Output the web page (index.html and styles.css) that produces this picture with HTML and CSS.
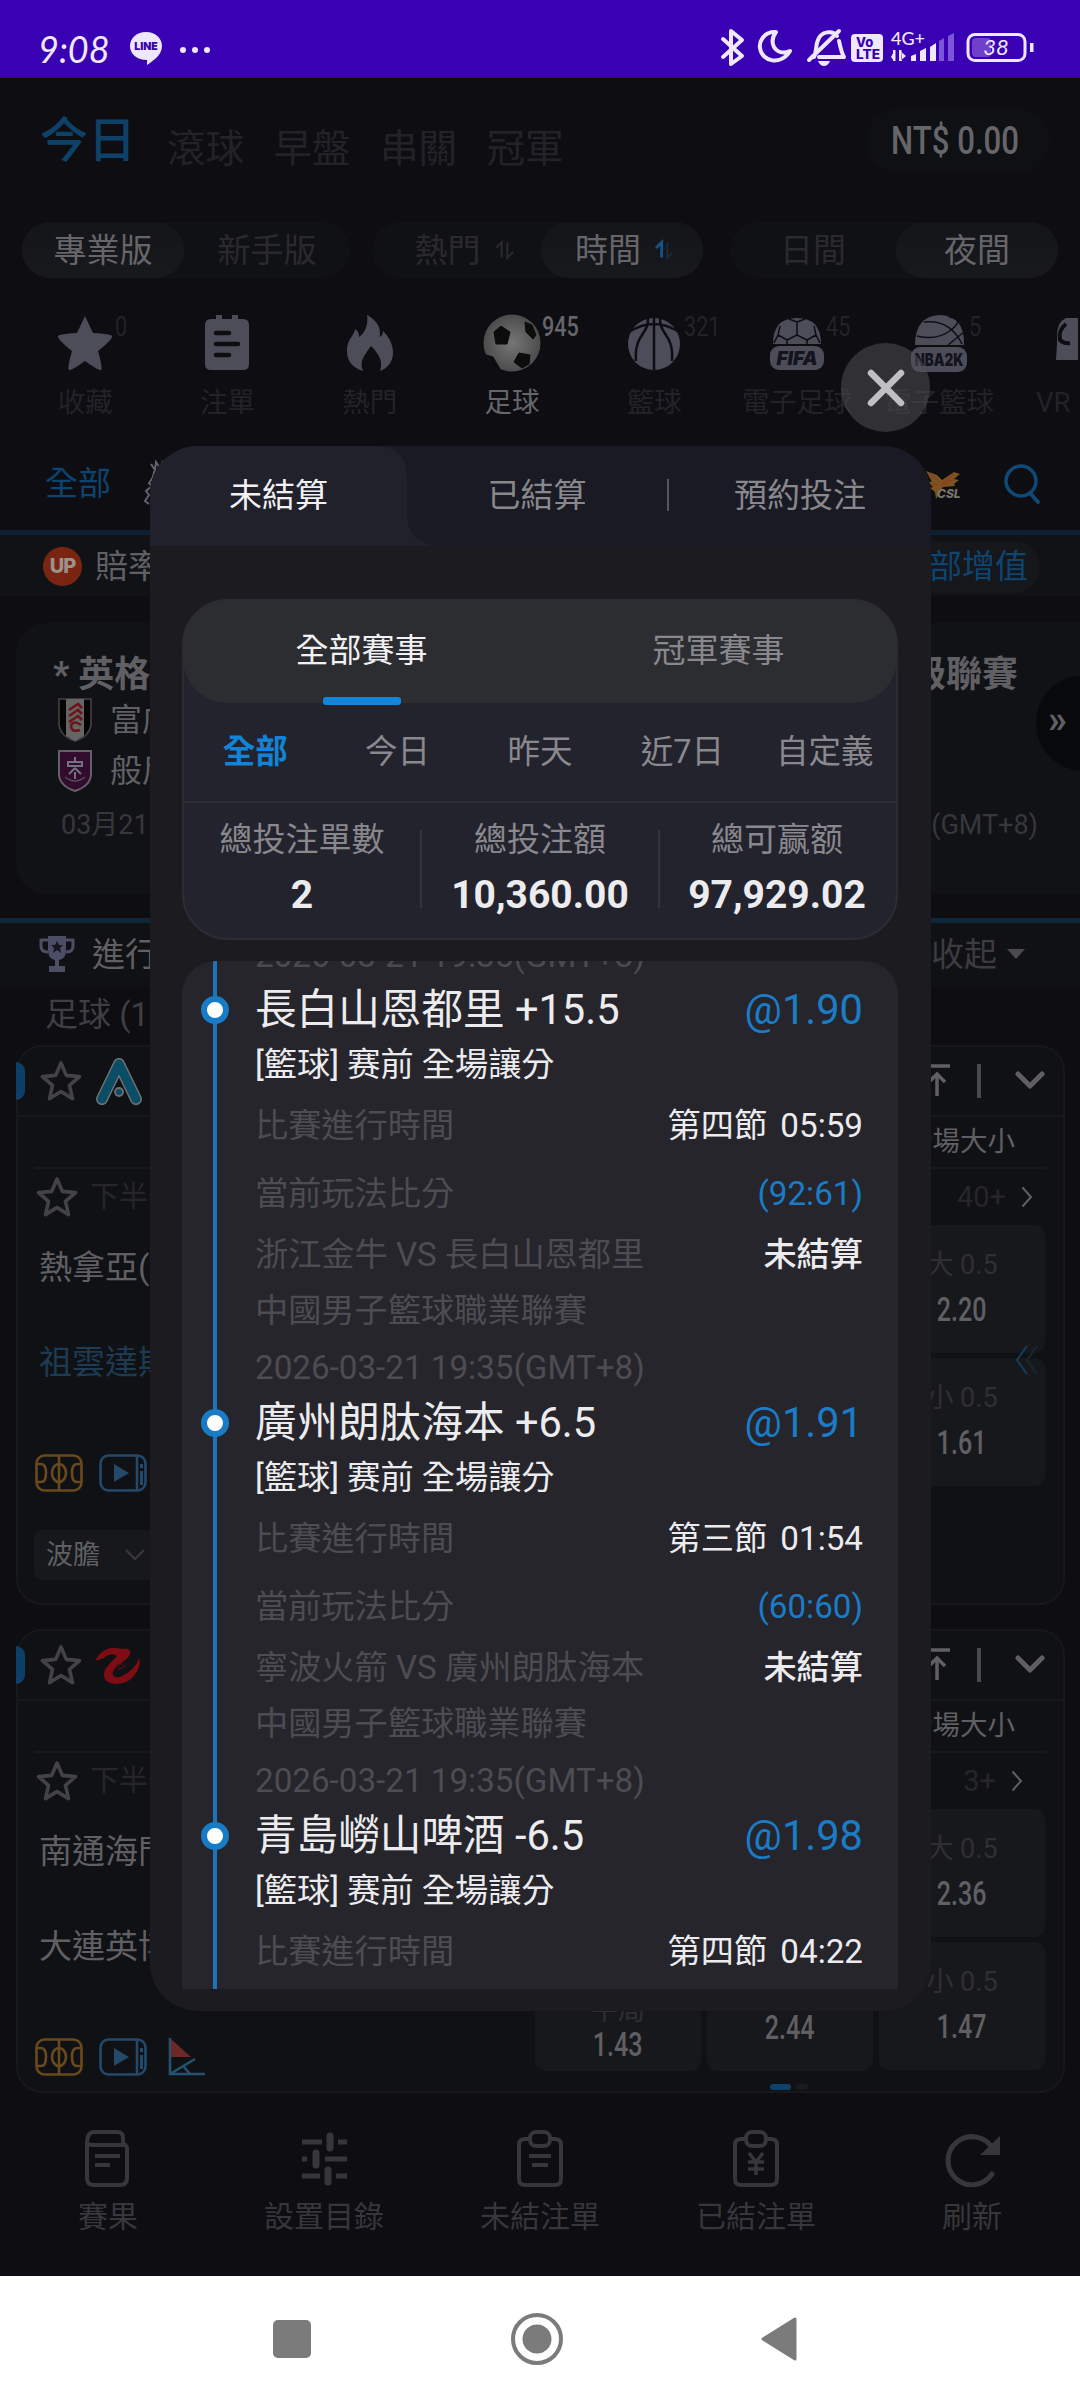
FILE: index.html
```html
<!DOCTYPE html>
<html lang="zh-Hant">
<head>
<meta charset="utf-8">
<title>未結算</title>
<link rel="stylesheet" href="styles.css">
</head>
<body>
<svg width="0" height="0" class="defs">
  <symbol id="star" viewBox="0 0 42 42"><path d="M21 3l5.300 12.400 13.200 1.200-10 8.800 3 13.200L21 31.500 9.500 38.600l3-13.200-10-8.800 13.200-1.200z" fill="none" stroke="currentColor" stroke-width="3.600" stroke-linejoin="round"/></symbol>
  <symbol id="court" viewBox="0 0 48 38"><g fill="none" stroke="currentColor" stroke-width="2.600"><rect x="1.500" y="1.500" width="45" height="35" rx="8"/><path d="M24 1.500v35M2 10h4q5 0 5 9t-5 9H2M46 10h-4q-5 0-5 9t5 9h4"/><ellipse cx="24" cy="19" rx="7" ry="9"/></g></symbol>
  <symbol id="video" viewBox="0 0 48 38"><g fill="none" stroke="currentColor" stroke-width="2.600"><rect x="1.500" y="1.500" width="45" height="35" rx="8"/><path d="M38 2v34"/></g><path d="M15 10l15 9-15 9zM41 10h3v4h-3zM41 17h3v14h-3z" fill="currentColor"/></symbol>
  <symbol id="totop" viewBox="0 0 26 36"><path d="M0 3h25M12 33V11M4 19l8-8 8 8" fill="none" stroke="currentColor" stroke-width="3.500"/></symbol>
  <symbol id="down" viewBox="0 0 30 20"><path d="M3 3l12 12L27 3" fill="none" stroke="currentColor" stroke-width="5" stroke-linecap="round" stroke-linejoin="round"/></symbol>
  <symbol id="next" viewBox="0 0 12 22"><path d="M1.500 1.500L10 11l-8.500 9.500" fill="none" stroke="currentColor" stroke-width="2"/></symbol>
</svg>

<header class="status">
  <div class="status-left">
    <span class="clock">9:08</span>
    <svg class="line-app" viewBox="0 0 32 33"><path d="M16 0c9 0 16 6 16 14 0 9-9 15-15 19v-5C7 28 0 22 0 14S7 0 16 0z" fill="#eee6fb"/><text x="16" y="18" text-anchor="middle" class="line-word">LINE</text></svg>
    <span class="dots"><i></i><i></i><i></i></span>
  </div>
  <svg class="status-icons" viewBox="0 0 320 42">
    <g fill="none" stroke="#efe8fb" stroke-width="4" stroke-linejoin="round" stroke-linecap="round">
      <path d="M4 12l19 17-11 8V4l11 9L4 30"/>
      <path d="M57 5c-13-1-17 11-16 16 2 14 21 18 30 3-7 3-13 1-16-4-3-6-1-11 2-15z"/>
      <path d="M95 30c3-5 1-11 4-17 3-9 15-10 19-4M120 14c2 8 2 11 5 16h-25M90 33l30-29"/>
    </g>
    <path d="M99 34h12q-2 5-6 5t-6-5z" fill="#efe8fb"/>
    <rect x="132" y="7" width="32" height="28" rx="4" fill="#efe8fb"/>
    <text x="137" y="20" class="volte">Vo</text><text x="137" y="32" class="volte" textLength="24" lengthAdjust="spacingAndGlyphs">LTE</text>
    <text x="172" y="18" class="gen">4G+</text>
    <path d="M175 24v10l-3-4M181 34V24l6 5M181 34h2V24zM192 34v-5l5-2v7zM201 34V24l6-3v13zM211 34V20l6-4v18z" fill="#efe8fb"/>
    <path d="M174 23h2.500v11H174zM180 23h2.500v11H180z" fill="#efe8fb"/>
    <path d="M220 34V14l5-3v23zM229 34V9l6-3v28z" fill="#7d55d8"/>
    <rect x="249" y="7.500" width="57" height="26" rx="7" fill="none" stroke="#efe8fb" stroke-width="3"/>
    <rect x="253" y="11" width="19" height="19" rx="4" fill="#7040cc"/>
    <rect x="311" y="16" width="3.500" height="9" fill="#efe8fb"/>
    <text x="277" y="28" text-anchor="middle" class="charge">38</text>
  </svg>
</header>

<main class="app">
  <div class="top">
    <nav class="top-tabs"><b>今日</b><span>滾球</span><span>早盤</span><span>串關</span><span>冠軍</span></nav>
    <div class="balance"><span class="din">NT$ 0.00</span></div>
  </div>

  <div class="segments">
    <div class="seg"><span class="on">專業版</span><span>新手版</span></div>
    <div class="seg mid"><span>熱門<svg class="sort" viewBox="0 0 20 18"><path d="M1 7l6-6v16M13 1v16l6-6" fill="none" stroke="currentColor" stroke-width="2.200"/></svg></span><span class="on">時間<svg class="sort" viewBox="0 0 20 18"><path d="M1 7l6-6v16" fill="none" stroke="#12538a" stroke-width="3"/><path d="M13 1v16l5-5" fill="none" stroke="#1a2c3c" stroke-width="2"/></svg></span></div>
    <div class="seg end"><span>日間</span><span class="on">夜間</span></div>
  </div>

  <nav class="sports">
    <div class="sport"><svg viewBox="0 0 58 58"><path d="M29 2l8 17q18 1 19 3 1 3-14 15 5 18 3 19-2 1-16-9-14 10-16 9-2-1 3-19Q1 25 2 22q1-2 19-3z" fill="currentColor"/></svg><em class="din">0</em><span>收藏</span></div>
    <div class="sport"><svg viewBox="0 0 58 58"><path d="M13 5h5V1h6v4h10V1h6v4h5q6 0 6 6v39q0 6-6 6H13q-6 0-6-6V11q0-6 6-6z" fill="currentColor"/><path d="M18 19h13M18 30h22M18 41h13" stroke="#0d0d12" stroke-width="4.500" stroke-linecap="round"/></svg><span>注單</span></div>
    <div class="sport"><svg viewBox="0 0 58 58"><path d="M26 1c14 8 13 16 13 22 2-1 3-4 3-6 6 6 10 13 10 22 0 10-7 16-13 18 3-9 0-16-9-25-7 10-12 15-8 25C12 54 6 47 6 38c0-14 7-15 8-23 3 2 4 4 4 8 5-3 10-12 8-22z" fill="currentColor"/></svg><span>熱門</span></div>
    <div class="sport active"><svg viewBox="0 0 58 58"><defs><radialGradient id="ball"><stop offset="0" stop-color="#767676"/><stop offset="1" stop-color="#4c4c4c"/></radialGradient></defs><circle cx="29" cy="29" r="28.500" fill="url(#ball)"/><path d="M18 12l9 6-3 12H13l-2-12zM42 8l7 3 4 10-3 4-7-7zM36 39l11 2-1 9-7 4-8-6zM3 41l7 2 7 12-6-3z" fill="#0b0c0b" stroke="#0b0c0b" stroke-linejoin="round"/></svg><em class="din">945</em><span>足球</span></div>
    <div class="sport"><svg viewBox="0 0 58 58"><circle cx="29" cy="30" r="26" fill="currentColor"/><path d="M29 3v54M4 18q25-16 50 0M23 3c1 19-14 16-12 44M35 3c-1 19 14 16 12 44" fill="none" stroke="#0d0d12" stroke-width="2.500"/></svg><em class="din">321</em><span>籃球</span></div>
    <div class="sport"><svg viewBox="0 0 58 58"><path d="M5 30q0-26 24-26t24 26z" fill="currentColor"/><path d="M29 8l8-3M29 8l-8-3M29 8v13M29 21l-10 5v5M29 21l10 5v5M19 26l-9-5M39 26l9-5M10 21l-4 8M48 21l4 8M10 21l2-9M48 21l-2-9" fill="none" stroke="#0d0d12" stroke-width="1.500"/><rect x="2" y="32" width="54" height="24" rx="9" fill="currentColor"/><text x="29" y="51" text-anchor="middle" class="badge-word">FIFA</text></svg><em class="din">45</em><span>電子足球</span></div>
    <div class="sport"><svg viewBox="0 0 58 58"><path d="M5 31Q5 2 30 1q25 1 24 30z" fill="currentColor"/><path d="M7 22q20 5 34-6t-2-13M14 8q26-3 38 22M54 18L38 31" fill="none" stroke="#0d0d12" stroke-width="1.500"/><rect x="1" y="33" width="56" height="25" rx="9" fill="currentColor"/><text x="29" y="52" text-anchor="middle" textLength="49" lengthAdjust="spacingAndGlyphs" class="badge-word nba">NBA2K</text></svg><em class="din">5</em><span>電子籃球</span></div>
    <div class="sport"><svg viewBox="0 0 58 58"><path d="M14 4Q5 8 5 22v8l-1 16h22V4z" fill="currentColor"/><path d="M14 10Q6 16 8 26q4 4 10 3" fill="none" stroke="#0d0d12" stroke-width="4"/></svg><span>VR</span></div>
  </nav>

  <div class="leagues">
    <span class="all">全部</span>
    <svg class="lion" viewBox="0 0 40 50"><path d="M8 5l4 6 1-8 4 6 3-7v10M22 13H11l-1 5-4 6 3 3-6 5 3 4-4 6 4 3" fill="none" stroke="#65616f" stroke-width="2"/></svg>
    <svg class="csl" viewBox="0 0 40 28"><path d="M2 0l11 4 5 5L30 1l6 2-6 5 5 1-5 4 1 2-12 1-7 12-1-7-5-4 3-1-6-6 5 1z" fill="#7a5520"/><path d="M4 2l11 8M30 3l-11 9-5 12M7 13l7 1M20 13l10-5" fill="none" stroke="#8f3f22" stroke-width="1.500"/><text x="13" y="27" class="csl-word">CSL</text></svg>
    <svg class="search" viewBox="0 0 36 40"><circle cx="17" cy="17" r="15" fill="none" stroke="#0e4a78" stroke-width="3.500"/><path d="M26 29l8 9" stroke="#0e4a78" stroke-width="4" stroke-linecap="round"/></svg>
  </div>

  <div class="boost">
    <span class="up">UP</span><span>賠率</span><span class="boost-btn">全部增值</span>
  </div>

  <section class="promo">
    <div class="promo-title"><span>* 英格蘭</span><span>超級聯賽</span></div>
    <div class="promo-team"><svg viewBox="0 0 34 44"><path d="M1 1h32v26q-2 12-16 16Q3 39 1 27z" fill="#050505" stroke="#464646" stroke-width="1.500"/><path d="M8 1h18v37l-9 5-9-5z" fill="#656565"/><path d="M11 12l9-6 4 4M11 18l9-6 4 4M11 24l9-6 4 4M23 27q-7-5-10 0 0 8 9 5" fill="none" stroke="#6d151b" stroke-width="2.600"/></svg><span>富咸</span></div>
    <div class="promo-team second"><svg viewBox="0 0 34 42"><path d="M1 1h32v24q-1 11-16 16Q2 36 1 25z" fill="#320c2c" stroke="#666069" stroke-width="2"/><path d="M10 12h14v4H10zM17 7v5M17 18l-6 6M17 18l6 6M17 22v7" fill="none" stroke="#737080" stroke-width="2"/><path d="M7 27q10 8 20 0" fill="none" stroke="#5a4a5c" stroke-width="1.500"/></svg><span>般尼</span></div>
    <div class="promo-date"><span>03月21</span><span>(GMT+8)</span></div>
    <div class="more">»</div>
  </section>

  <div class="live-head">
    <svg class="cup" viewBox="0 0 36 36"><path d="M9 0h18v14q0 9-7 10v6h6v6H10v-6h6v-6q-7-1-7-10z" fill="#4c4e66"/><path d="M9 4H2v6q0 6 7 6M27 4h7v6q0 6-7 6" fill="none" stroke="#4c4e66" stroke-width="3"/><path d="M18 5l2 4h4l-3 3 1 5-4-3-4 3 1-5-3-3h4z" fill="#17171f"/></svg>
    <span>進行</span><span class="fold">收起<i></i></span>
  </div>
  <div class="group">足球 (1</div>

  <section class="match">
    <div class="match-head"><i class="tab"></i><svg class="star"><use href="#star"/></svg>
      <svg class="logo" viewBox="0 0 50 50"><path d="M25 8L8 43M25 8l17 35" fill="none" stroke="#6f7275" stroke-width="12" stroke-linejoin="round" stroke-linecap="round"/><path d="M25 8L8 43M25 8l17 35" fill="none" stroke="#094d66" stroke-width="9" stroke-linejoin="round" stroke-linecap="round"/><circle cx="25" cy="36" r="4" fill="#094d66" stroke="#6f7275" stroke-width="1.800"/></svg>
      <div class="tools"><svg class="totop"><use href="#totop"/></svg><i></i><svg class="down"><use href="#down"/></svg></div></div>
    <div class="match-cols">全場大小</div>
    <div class="match-time"><svg class="star"><use href="#star"/></svg><span>下半</span><span class="count">40+</span><svg class="next"><use href="#next"/></svg></div>
    <div class="match-main">
      <div class="teams"><p>熱拿亞(</p><p class="home">祖雲達斯</p>
        <div class="feeds"><svg class="court"><use href="#court"/></svg><svg class="video"><use href="#video"/></svg></div></div>
      <div class="odds"><div class="odd"><small>大 0.5</small><b class="din">2.20</b></div><div class="odd"><small>小 0.5</small><b class="din">1.61</b></div>
      <svg class="swipe" viewBox="0 0 24 30"><path d="M12 1L2 15l10 14" fill="none" stroke="#153d5e" stroke-width="2"/><path d="M22 1L12 15l10 14" fill="none" stroke="#162838" stroke-width="2"/></svg></div>
    </div>
    <div class="chip"><span>波膽</span><svg viewBox="0 0 20 12"><path d="M1 1l9 9 9-9" fill="none" stroke="#3a3a3d" stroke-width="2"/></svg></div>
  </section>

  <section class="match last">
    <div class="match-head"><i class="tab"></i><svg class="star"><use href="#star"/></svg>
      <svg class="logo" viewBox="0 0 50 50"><path d="M1 21C6 12 13 7 22 8l8 1c5-1 7 2 6 5-1 5-11 9-16 16-4 6 2 10 10 5 7-4 13-10 15-17 3 8-4 20-13 24-9 4-21 2-22-6C9 28 18 22 23 16c-3-3-8-2-12 1-3 3-6 2-10 4z" fill="#7d0c13"/><path d="M22 24l2 2M27 23l1 2M31 25l-2 2M24 29l5-1" stroke="#600d13" stroke-width="1.500"/></svg>
      <div class="tools"><svg class="totop"><use href="#totop"/></svg><i></i><svg class="down"><use href="#down"/></svg></div></div>
    <div class="match-cols">全場大小</div>
    <div class="match-time shift"><svg class="star"><use href="#star"/></svg><span>下半</span><span class="count">3+</span><svg class="next"><use href="#next"/></svg></div>
    <div class="match-main">
      <div class="teams"><p>南通海門</p><p>大連英博</p>
        <div class="feeds"><svg class="court"><use href="#court"/></svg><svg class="video"><use href="#video"/></svg><svg class="flag" viewBox="0 0 38 38"><path d="M2 0v36h35M2 36l25-15M16 29l6 7" fill="none" stroke="#245271" stroke-width="2.600"/><path d="M3 1l20 18H3z" fill="#6c2727"/></svg></div></div>
      <div class="odds narrow"><div class="odd"><small>平局</small><b class="din">1.43</b></div></div>
      <div class="odds low"><div class="odd"><b class="din">2.44</b></div></div>
      <div class="odds"><div class="odd"><small>大 0.5</small><b class="din">2.36</b></div><div class="odd"><small>小 0.5</small><b class="din">1.47</b></div></div>
    </div>
    <div class="pager"><i></i><i></i></div>
  </section>

  <nav class="bottom">
    <div><svg viewBox="0 0 60 60"><g fill="none" stroke="currentColor" stroke-width="4"><path d="M9 15V49q0 7 7 7h26q7 0 7-7V20q0-5-5-5M9 15q0-12 7-12h23q6 0 6 6v7H16q-7 0-7-3"/></g><path d="M17 27h25M17 36h15" stroke="currentColor" stroke-width="4"/></svg><span>賽果</span></div>
    <div><svg viewBox="0 0 60 60"><path d="M8 13h20M44 13h9M8 30h5M31 30h22M8 47h18M42 47h11" stroke="currentColor" stroke-width="5"/><path d="M36 7v12M22 24v12M34 41v12" stroke="currentColor" stroke-width="7" stroke-linecap="round"/></svg><span>設置目錄</span></div>
    <div><svg viewBox="0 0 60 60"><g fill="none" stroke="currentColor" stroke-width="4"><path d="M20 10h-5q-6 0-6 6v34q0 6 6 6h30q6 0 6-6V16q0-6-6-6h-5"/><rect x="20" y="3" width="20" height="14" rx="6"/></g><path d="M19 27h22M22 36h16" stroke="currentColor" stroke-width="4"/></svg><span>未結注單</span></div>
    <div><svg viewBox="0 0 60 60"><g fill="none" stroke="currentColor" stroke-width="4"><path d="M20 10h-5q-6 0-6 6v34q0 6 6 6h30q6 0 6-6V16q0-6-6-6h-5"/><rect x="20" y="3" width="20" height="14" rx="6"/><path d="M23 24l7 9 7-9M30 33v13M22 33h16M22 40h16" stroke-width="3.500"/></g></svg><span>已結注單</span></div>
    <div><svg viewBox="0 0 60 60"><path d="M50 45A24 24 0 1 1 51 20" fill="none" stroke="currentColor" stroke-width="5" stroke-linecap="round"/><path d="M58 7v19H38z" fill="currentColor"/></svg><span>刷新</span></div>
  </nav>
</main>

<footer class="sysnav">
  <svg viewBox="0 0 1080 126"><rect x="273" y="44" width="38" height="38" rx="5" fill="#7b7b7b"/><circle cx="537" cy="63" r="24" fill="none" stroke="#7b7b7b" stroke-width="4"/><circle cx="537" cy="63" r="14.500" fill="#7b7b7b"/><path d="M795 43v40L763 63z" fill="#7b7b7b" stroke="#7b7b7b" stroke-width="3" stroke-linejoin="round"/></svg>
</footer>

<button class="close"><svg viewBox="0 0 38 38"><path d="M4 4l30 30M34 4L4 34" stroke="#c0bfc3" stroke-width="6.500" stroke-linecap="round"/></svg></button>

<div class="modal">
  <div class="modal-tabs">
    <svg class="modal-tab-bg" viewBox="0 0 290 100" preserveAspectRatio="none"><path d="M0 0H225Q257 0 257 32V68Q257 97 287 100H0z" fill="#20212b"/></svg>
    <span class="on">未結算</span><span>已結算</span><i></i><span class="third">預約投注</span>
  </div>
  <div class="filter">
    <div class="kind"><span class="on">全部賽事</span><span>冠軍賽事</span></div>
    <div class="range"><b>全部</b><span>今日</span><span>昨天</span><span>近7日</span><span>自定義</span></div>
    <div class="sums"><div><span>總投注單數</span><b>2</b></div><div><span>總投注額</span><b>10,360.00</b></div><div><span>總可赢额</span><b>97,929.02</b></div></div>
  </div>
  <div class="bets">
    <div class="tail">2026-03-21 19:35(GMT+8)</div>
    <article class="bet">
      <div class="pick"><i></i><span>長白山恩都里 +15.5</span><em>@1.90</em></div>
      <div class="play">[籃球] 赛前 全場讓分</div>
      <div class="line"><span>比賽進行時間</span><b>第四節 <u>05:59</u></b></div>
      <div class="line"><span>當前玩法比分</span><em>(92:61)</em></div>
      <div class="info"><span>浙江金牛 VS 長白山恩都里</span><b>未結算</b></div>
      <div class="info">中國男子籃球職業聯賽</div>
      <div class="date">2026-03-21 19:35(GMT+8)</div>
    </article>
    <article class="bet">
      <div class="pick"><i></i><span>廣州朗肽海本 +6.5</span><em>@1.91</em></div>
      <div class="play">[籃球] 赛前 全場讓分</div>
      <div class="line"><span>比賽進行時間</span><b>第三節 <u>01:54</u></b></div>
      <div class="line"><span>當前玩法比分</span><em>(60:60)</em></div>
      <div class="info"><span>寧波火箭 VS 廣州朗肽海本</span><b>未結算</b></div>
      <div class="info">中國男子籃球職業聯賽</div>
      <div class="date">2026-03-21 19:35(GMT+8)</div>
    </article>
    <article class="bet">
      <div class="pick"><i></i><span>青島嶗山啤酒 -6.5</span><em>@1.98</em></div>
      <div class="play">[籃球] 赛前 全場讓分</div>
      <div class="line"><span>比賽進行時間</span><b>第四節 <u>04:22</u></b></div>
    </article>
  </div>
</div>
</body>
</html>
```
FILE: styles.css
```css
* { box-sizing: border-box; margin: 0; padding: 0; }
body { width: 1080px; height: 2401px; position: relative; overflow: hidden; background: #0d0d12; font: 33px/1 Roboto, "Noto Sans CJK TC", sans-serif; color: #606064; display: flex; flex-direction: column; white-space: nowrap; }
i, em { font-style: normal; }
svg { display: block; flex: none; overflow: visible; }
.defs { position: absolute; }
.din { display: inline-block; transform: scaleX(.8); font-family: Roboto, sans-serif; }

.status { height: 78px; background: #3a00b3; display: flex; justify-content: space-between; padding: 27px 41px 0 38px; color: #efe8fb; }
.status-left { display: flex; align-items: center; height: 42px; }
.clock { font: italic 36px/1 Lato, sans-serif; width: 92px; padding-top: 2px; }
.line-app { width: 32px; height: 33px; }
.line-word { font: 900 10.500px Inter, sans-serif; fill: #3a00b3; }
.dots { display: flex; gap: 6px; margin: 4px 0 0 18px; }
.dots i { width: 6px; height: 6px; border-radius: 3px; background: #efe8fb; }
.status-icons { width: 320px; height: 42px; }
.volte { font: 800 13px Inter, sans-serif; fill: #3a00b3; }
.gen { font: 500 18px Lato, sans-serif; fill: #efe8fb; }
.charge { font: italic 22px Lato, sans-serif; fill: #efe8fb; }

.app { height: 2198px; overflow: hidden; }
.top { height: 126px; display: flex; justify-content: space-between; align-items: center; padding: 0 30px 0 40px; }
.top-tabs { display: flex; align-items: center; color: #232327; font-size: 38.500px; }
.top-tabs b { font-size: 48px; font-weight: 500; color: #0e4167; margin-right: 31px; }
.top-tabs span { margin: 17px 29.500px 0 0; }
.balance { width: 185px; height: 64px; border-radius: 32px; background: #0f1013; display: flex; align-items: center; justify-content: center; font-size: 39px; font-weight: 500; color: #66666a; padding-right: 4px; }
.balance .din { margin: 0 -20px; }

.segments { display: flex; gap: 22px; padding: 18px 22px 0; height: 97px; align-items: flex-start; }
.seg { width: 328px; height: 56px; border-radius: 28px; background: #101114; display: flex; color: #2a2a2e; }
.seg.mid { width: 331px; }
.seg.end { margin-left: 5px; }
.seg span { flex: 1; display: flex; align-items: center; justify-content: center; border-radius: 28px; gap: 14px; }
.seg .on { flex: 0 0 162px; background: linear-gradient(#141518, #18191c); color: #66666a; }
.sort { width: 19px; height: 18px; }
.seg.mid span { padding-left: 15px; }
.seg.mid .on { padding-left: 5px; }

.sports { display: flex; height: 145px; padding: 13px 0 0 14px; color: #4d4d5a; }
.sport { width: 142.300px; flex: none; display: flex; flex-direction: column; align-items: center; position: relative; }
.sport svg { width: 58px; height: 58px; }
.sport span { font-size: 27.500px; color: #232327; margin-top: 17px; }
.sport:last-child { width: 70px; align-items: flex-start; padding-left: 26px; }
.sport:last-child svg { margin-left: 16px; }
.sport em { position: absolute; left: 101px; top: 0; font-size: 27px; color: #232327; transform-origin: left; }
.sport.active em, .sport.active span { color: #66666a; }
.sport.active em { font-weight: 500; }
.badge-word { font: italic 900 19px Inter, sans-serif; fill: #14141c; }
.nba { font-style: normal; font-size: 17px; }

.leagues { height: 84px; display: flex; align-items: center; padding: 0 40px 9px 45px; color: #0e4470; }
.lion { width: 40px; height: 50px; margin: 0 0 0 32px; }
.csl { width: 40px; height: 28px; margin: 2px 40px 0 auto; }
.csl-word { font: italic 800 12px Inter, sans-serif; fill: #77756c; }
.search { width: 36px; height: 40px; }

.boost { height: 66px; border-top: 5px solid #0e1f31; background: #101216; display: flex; align-items: center; padding: 2px 40px 0 43px; gap: 13px; }
.up { width: 39px; height: 39px; border-radius: 50%; background: #7a2512; color: #9d918c; font: 800 20px/39px Inter, sans-serif; letter-spacing: -1px; text-align: center; }
.boost-btn { margin-left: auto; height: 52px; border-radius: 26px; background: #15171a; padding: 9px 12px 0 30px; color: #0e4470; }

.promo { margin: 27px 0 24px 16px; height: 271px; border-radius: 30px 0 0 30px; background: #101216; position: relative; padding: 30px 62px 0 37px; overflow: hidden; }
.promo-title { display: flex; justify-content: space-between; font-size: 36px; font-weight: 700; color: #606064; height: 43px; align-items: center; }
.promo-team { display: flex; align-items: center; gap: 18px; height: 48px; padding-left: 5px; font-size: 32px; color: #606064; }
.promo-team svg { width: 34px; height: 44px; }
.promo-team.second { height: 54px; }
.promo-date { display: flex; justify-content: space-between; font-size: 27px; color: #37373b; margin: 14px -20px 0 8px; }
.more { position: absolute; right: -52px; top: 52px; width: 96px; height: 96px; border-radius: 50%; background: #08090b; font-size: 38px; font-weight: 700; padding: 25px 0 0 12px; color: #606064; }

.live-head { border-top: 5px solid #0e263a; height: 69px; background: #101115; display: flex; align-items: center; padding: 0 55px 2px 39px; }
.cup { width: 36px; height: 36px; margin-right: 17px; }
.fold { margin-left: auto; display: flex; align-items: center; gap: 10px; color: #3c3c40; }
.fold i { border: 9px solid transparent; border-top: 10px solid #4b4b4e; border-bottom: 0; }
.group { height: 58px; padding: 11px 45px 0; color: #3f3f43; }

.match { margin: 0 15px 24px 16px; height: 560px; border: 2px solid #17181b; border-radius: 26px; background: #101114; position: relative; }
.match.last { height: 464px; margin-bottom: 0; }
.match-head { height: 70px; border-bottom: 2px solid #17181b; display: flex; align-items: center; padding: 0 18px 0 0; }
.tab { width: 9px; height: 38px; border-radius: 0 12px 12px 0; background: #0e3f66; margin-left: -2px; }
.star { width: 42px; height: 42px; color: #434347; }
.match-head .star { margin-left: 15px; }
.logo { width: 50px; height: 50px; margin-left: 12px; }
.tools { margin-left: auto; display: flex; align-items: center; color: #606064; }
.totop { width: 26px; height: 36px; }
.tools i { width: 4px; height: 34px; background: #4a4a4e; margin: 0 34px 0 26px; }
.down { width: 30px; height: 20px; }
.match-cols { height: 52px; margin: 0 17px; border-bottom: 2px solid #17181b; text-align: right; font-size: 27.500px; padding: 11px 31px 0; color: #606064; }
.match-time { height: 56px; display: flex; align-items: center; padding: 0 30px 0 18px; font-size: 29px; color: #26262a; }
.match-time.shift { padding-right: 40px; }
.match-time span:nth-child(2) { margin-left: 12px; }
.count { margin-left: auto; margin-right: 15px; }
.next { width: 12px; height: 22px; color: #606064; }
.match-main { display: flex; gap: 6px; padding: 0 18px 0 21px; height: 262px; }
.teams { flex: 1; min-width: 0; }
.teams p { height: 95px; padding-top: 26px; }
.teams .home { color: #1d3b52; }
.feeds { display: flex; gap: 16px; padding-top: 39px; margin-left: -4px; }
.court, .video { width: 48px; height: 38px; }
.court { color: #694a1d; }
.video { color: #25496a; }
.flag { width: 38px; height: 38px; margin-left: 5px; }
.odds { width: 166px; display: flex; flex-direction: column; gap: 5px; position: relative; }
.odd { height: 128px; border-radius: 10px; background: #17181b; display: flex; flex-direction: column; align-items: center; padding-top: 27px; }
.odd small { font-size: 27px; color: #2f2f33; margin-bottom: 14px; }
.odd b { font-size: 33px; font-weight: 500; color: #606064; transform: scaleX(.76); }
.odds.narrow, .odds.low { justify-content: flex-end; }
.odds.narrow .odd { height: 90px; padding-top: 17px; }
.odds.narrow small { margin-bottom: 3px; }
.odds.low .odd { padding-top: 68px; }
.swipe { position: absolute; width: 24px; height: 30px; right: 6px; top: 120px; }
.chip { width: 180px; height: 50px; border-radius: 8px; background: #17181b; margin: 43px 0 0 16px; padding: 0 12px; display: flex; align-items: center; gap: 25px; font-size: 27px; }
.chip svg { width: 20px; height: 12px; }
.pager { display: flex; gap: 5px; margin: 13px 0 0 752px; }
.pager i { width: 12px; height: 6px; border-radius: 3px; background: #1a1b1f; }
.pager i:first-child { width: 21px; background: #0e4268; }

.bottom { display: flex; padding-top: 36px; color: #37373b; }
.bottom div { width: 216px; display: flex; flex-direction: column; align-items: center; }
.bottom svg { width: 60px; height: 60px; }
.bottom span { font-size: 30px; margin-top: 13px; }

.sysnav { height: 125px; background: #fff; flex: none; }
.sysnav svg { width: 1080px; height: 126px; }

.close { position: absolute; left: 841px; top: 343px; width: 89px; height: 89px; border: 0; border-radius: 50%; background: rgba(82,82,86,.52); display: flex; align-items: center; justify-content: center; }
.close svg { width: 38px; height: 38px; }

.modal { position: absolute; left: 150px; top: 446px; width: 781px; height: 1565px; border-radius: 48px; background: #1c1b20; overflow: hidden; padding: 0 33px 22px 32px; display: flex; flex-direction: column; color: #88888d; }
.modal-tabs { height: 100px; margin: 0 -33px 53px -32px; padding-bottom: 2px; background: #191a23; display: flex; align-items: center; position: relative; }
.modal-tab-bg { position: absolute; left: 0; top: 0; width: 290px; height: 100px; }
.modal-tabs span { width: 257px; text-align: center; position: relative; }
.modal-tabs span:nth-of-type(2) { width: 260px; }
.modal-tabs i { width: 2px; height: 32px; background: #55555b; }
.modal-tabs .third { width: 262px; }
.modal-tabs .on, .kind .on { color: #f1f1f3; }

.filter { height: 341px; border: 2px solid #2c2c34; border-radius: 46px; background: #23232d; flex: none; }
.kind { height: 102px; margin: 0 -1px; background: #2c2d31; border-radius: 44px; display: flex; }
.kind span { flex: 1; display: flex; align-items: center; justify-content: center; position: relative; padding-bottom: 3px; }
.kind .on::after { content: ""; position: absolute; width: 78px; height: 8px; border-radius: 3px; background: #1485d8; bottom: -2px; left: 140px; }
.range { height: 100px; border-bottom: 2px solid #2c2c34; display: flex; align-items: center; font-size: 32.500px; }
.range > * { flex: 1; text-align: center; }
.range b { color: #1283d6; font-weight: 700; }
.sums { display: flex; padding-top: 27px; }
.sums div { width: 238px; height: 78px; display: flex; flex-direction: column; align-items: center; justify-content: space-between; border-right: 2px solid #34343d; }
.sums div:last-child { border: 0; width: 234px; }
.sums span { margin-top: -7px; }
.sums b { font-size: 39px; color: #ececef; margin-bottom: -7px; }

.bets { margin-top: 21px; height: 1028px; flex: none; overflow: hidden; border-radius: 34px 34px 0 0; background: linear-gradient(#1b75b8, #1b75b8) 31px 0 / 4px 100% no-repeat #26252b; padding: 0 35px 0 73px; font-size: 33.200px; }
.tail { margin-top: -35px; height: 57px; padding-top: 13px; color: #4a4a50; }
.bet { height: 413px; color: #4d4c52; }
.bet > div { display: flex; justify-content: space-between; align-items: center; }
.bet .pick { height: 54px; font-size: 41.600px; color: #ececef; position: relative; }
.pick i { position: absolute; left: -54px; top: 13px; width: 28px; height: 28px; border-radius: 50%; border: 6px solid #187bc6; background: #fff; }
.bet em { color: #1a7cc6; }
.bet .play { height: 54px; color: #ececef; padding-top: 2px; }
.line { height: 69px; }
.line + .line { height: 67px; }
.bet b { color: #ececef; font-weight: 500; }
.line b { font-weight: 400; }
.bet u { text-decoration: none; margin-left: 5px; }
.info { height: 56px; }
.date { height: 57px; }
```
